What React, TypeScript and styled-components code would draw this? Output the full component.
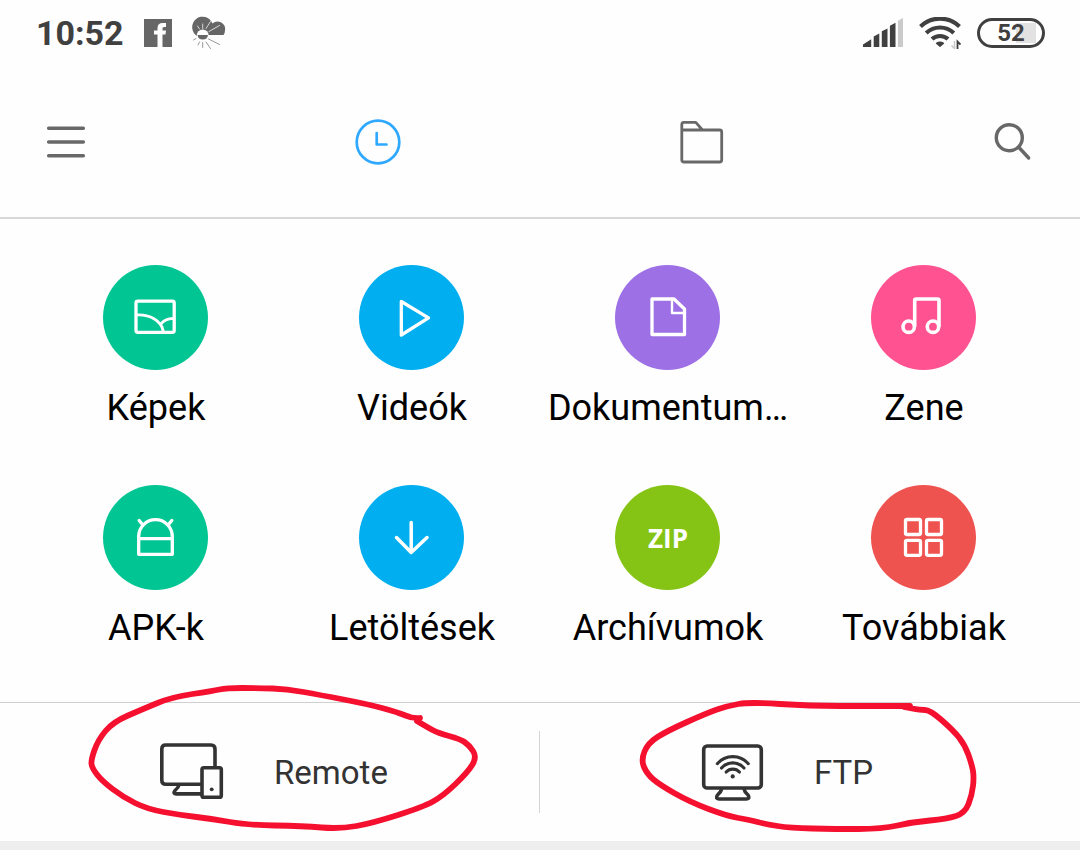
import React from "react";
import styled, { createGlobalStyle } from "styled-components";

const GlobalStyle = createGlobalStyle`
  * { box-sizing: border-box; }
  body { margin: 0; background: #eeeeee; font-family: Roboto, "Liberation Sans", sans-serif; }
  button { font: inherit; color: inherit; background: none; border: 0; padding: 0; margin: 0; cursor: pointer; }
  svg { display: block; flex: none; }
`;

const Screen = styled.main`
  background: #fefefe;
`;

const StatusBar = styled.div`
  display: flex;
  justify-content: space-between;
  padding: 13px 35px 14px 36px;
  color: #404040;
`;

const StatusGroup = styled.div<{ $gap: number }>`
  display: flex;
  align-items: center;
  height: 40px;
  gap: ${(p) => p.$gap}px;
`;

const Time = styled.time`
  font-size: 34px;
  line-height: 40px;
  font-weight: 700;
`;

const Battery = styled.div`
  display: flex;
  align-items: center;
  justify-content: center;
  width: 68px;
  height: 30px;
  border: 3px solid #404040;
  border-radius: 15px;
  background: linear-gradient(90deg, #e2e2e2, #e2e2e2) 36px center / 20px 20px no-repeat;
  font-size: 24px;
  line-height: 24px;
  font-weight: 700;
`;

const TabBar = styled.nav`
  display: grid;
  grid-template-columns: 2fr 3fr 3fr 2fr;
  height: 152px;
  border-bottom: 2px solid #d8d8d8;
`;

const TabButton = styled.button<{ $align?: string; $active?: boolean }>`
  display: flex;
  align-items: center;
  justify-content: ${(p) => p.$align ?? "center"};
  padding: 0 46px;
  color: ${(p) => (p.$active ? "#2fa8ff" : "#686868")};
`;

const Categories = styled.section`
  display: grid;
  grid-template-columns: repeat(4, minmax(0, 1fr));
  row-gap: 55px;
  padding: 46px 29px 52px 27px;
`;

const Category = styled.button`
  display: flex;
  flex-direction: column;
  align-items: center;
  gap: 16px;
`;

const Disc = styled.span<{ $color: string }>`
  display: flex;
  align-items: center;
  justify-content: center;
  width: 105px;
  height: 105px;
  border-radius: 50%;
  background: ${(p) => p.$color};
  color: #fff;
`;

const ZipMark = styled.span`
  padding-left: 2px;
  font-family: "Open Sans", "Noto Sans", sans-serif;
  font-size: 26px;
  line-height: 36px;
  font-weight: 700;
`;

const CategoryLabel = styled.span`
  padding-left: 2px;
  font-size: 36px;
  line-height: 44px;
  color: #000;
  white-space: nowrap;
`;

const Connections = styled.section`
  display: grid;
  grid-template-columns: 1fr 1fr;
  border-top: 1px solid #d0d0d0;
`;

const Connection = styled.div`
  position: relative;
  display: flex;
  padding: 28px 0;

  &:first-child > button {
    border-right: 1px solid #d4d4d4;
  }
`;

const ConnectionButton = styled.button`
  display: flex;
  align-items: center;
  gap: 49px;
  width: 100%;
  height: 82px;
  padding-left: 160px;
  font-size: 33px;
  line-height: 40px;
  color: #333;
`;

const ConnectionLabel = styled.span`
  padding: 2px 0 0 1px;
`;

const Scribble = styled.svg`
  position: absolute;
  top: 0;
  left: 0;
  overflow: visible;
  pointer-events: none;
`;

type Point = [number, number];

/* Joins the pen samples with curves through the midpoints. */
const penPath = (pts: Point[]) => {
  let d = `M${pts[0][0]} ${pts[0][1]}`;
  for (let i = 1; i < pts.length - 1; i++) {
    const [x, y] = pts[i];
    const [nx, ny] = pts[i + 1];
    d += ` Q${x} ${y} ${(x + nx) / 2} ${(y + ny) / 2}`;
  }
  const last = pts[pts.length - 1];
  return `${d} L${last[0]} ${last[1]}`;
};

const remoteLoop: Point[] = [
  [420, 718], [414, 719], [397, 712], [367, 704], [320, 695], [287, 689], [258, 688], [226, 688],
  [213, 691], [172, 697], [143, 709], [113, 722], [98, 740], [91, 760], [92, 768], [102, 781],
  [123, 797], [147, 809], [180, 815], [213, 819], [247, 825], [303, 826], [340, 829], [373, 823],
  [423, 807], [443, 796], [468, 772], [477, 757], [469, 745], [460, 739], [438, 733], [427, 727],
  [417, 721],
];

const ftpLoop: Point[] = [
  [910, 706], [870, 706], [810, 706], [750, 702], [727, 706], [707, 713], [667, 731], [648, 743],
  [641, 760], [647, 774], [660, 785], [690, 802], [727, 816], [750, 820], [765, 824], [790, 828],
  [835, 829], [882, 829], [913, 822], [947, 819], [965, 813], [972, 795], [974, 777], [972, 765],
  [965, 745], [953, 730], [930, 710], [920, 710], [904, 707],
];

const PenLoop = ({ points, x }: { points: Point[]; x: number }) => (
  <Scribble width="540" height="138" viewBox={`${x} 703 540 138`} fill="none" aria-hidden="true">
    <path d={penPath(points)} stroke="#f4102e" strokeWidth="5.800" strokeLinecap="round" strokeLinejoin="round" />
  </Scribble>
);

const DiscIcon = ({ children }: { children: React.ReactNode }) => (
  <svg width="105" height="105" viewBox="0 0 105 105" fill="none" stroke="currentColor" strokeWidth="3.300" strokeLinecap="round" strokeLinejoin="round" aria-hidden="true">
    {children}
  </svg>
);

const categories = [
  {
    label: "Képek",
    color: "#02c594",
    icon: (
      <DiscIcon>
        <rect x="33" y="36.200" width="38.200" height="31.200" rx="1.800" />
        <path d="M34 50C46 49.500 58.500 55 60.500 67M70.500 53.300Q61.500 53.500 57.500 59.500" strokeWidth="2.800" />
      </DiscIcon>
    ),
  },
  {
    label: "Videók",
    color: "#01aeef",
    icon: (
      <DiscIcon>
        <path d="M42.300 36.500L69.500 52.800L42.300 70Z" />
      </DiscIcon>
    ),
  },
  {
    label: "Dokumentum…",
    color: "#9d70e6",
    icon: (
      <DiscIcon>
        <path d="M37 34H59L69.500 44V69.500H37Z" />
        <path d="M57 34.500V48H69" strokeWidth="2.400" />
      </DiscIcon>
    ),
  },
  {
    label: "Zene",
    color: "#ff5290",
    icon: (
      <DiscIcon>
        <circle cx="37.700" cy="61.700" r="5.700" strokeWidth="3.600" />
        <circle cx="62" cy="61.700" r="5.700" strokeWidth="3.600" />
        <path d="M43.700 61V35.500Q43.700 34 45.200 34H66.500Q68 34 68 35.500V61" strokeWidth="3.600" />
      </DiscIcon>
    ),
  },
  {
    label: "APK-k",
    color: "#02c594",
    icon: (
      <DiscIcon>
        <path d="M35.700 69.300V51.500A16.800 16.800 0 0 1 69.300 51.500V69.300ZM35.700 53.700H69.300" />
        <path d="M36.200 35.500L39.500 39.500M68.800 35.500L65.500 39.500" />
      </DiscIcon>
    ),
  },
  {
    label: "Letöltések",
    color: "#01aeef",
    icon: (
      <DiscIcon>
        <path d="M52.200 37.500V67.500M37.500 52.500L52.200 67.500L68 52.500" strokeWidth="3.500" />
      </DiscIcon>
    ),
  },
  { label: "Archívumok", color: "#85c415", icon: <ZipMark>ZIP</ZipMark> },
  {
    label: "Továbbiak",
    color: "#ef5350",
    icon: (
      <DiscIcon>
        <rect x="34.500" y="34.500" width="15" height="15" rx="1.500" />
        <rect x="55.500" y="34.500" width="15" height="15" rx="1.500" />
        <rect x="34.500" y="55.300" width="15" height="15" rx="1.500" />
        <rect x="55.500" y="55.300" width="15" height="15" rx="1.500" />
      </DiscIcon>
    ),
  },
];

const FacebookIcon = () => (
  <svg width="28" height="28" viewBox="0 0 28 28" aria-label="Facebook">
    <path d="M0 0H28V28H0Z" fill="#666" />
    <path d="M13.500 28V15.500H10V11.500H13.500V9C13.500 5.700 15.500 4 18.500 4H22V8H20.200C18.800 8 18.500 8.700 18.500 10V11.500H22L21.500 15.500H18.500V28Z" fill="#fefefe" />
  </svg>
);

const WeatherIcon = () => (
  <svg width="34" height="34" viewBox="0 0 34 34" aria-label="Weather">
    <path d="M5 20A10.500 10.500 0 1 1 20.500 7.500A7.600 7.600 0 0 1 33 14.500Q33 17 31.500 19H17Z" fill="#666" />
    <g stroke="#e4e4e4" strokeWidth="0.900" strokeLinecap="round">
      <path d="M10.700 12.500V8M14 12.500L18.500 5.500M17 15.500L27.500 9.500M7.500 13L5.500 10" />
    </g>
    <circle cx="10.700" cy="19.500" r="6" fill="#fefefe" />
    <path d="M5.500 19H16A5.300 5.300 0 0 1 5.500 19Z" fill="#666" />
    <g stroke="#999" strokeWidth="1" strokeLinecap="round">
      <path d="M10.700 26.500V31.500M14 26L18.500 32.500M16.500 23L27.500 28.500M7.500 26L6 29M4 22.500L1.500 24" />
    </g>
  </svg>
);

const SignalIcon = () => (
  <svg width="40" height="30" viewBox="0 0 40 30" fill="#404040" aria-label="Signal">
    <path d="M0 29V26.500L8.200 21.300V29ZM10.700 29V18.500L16.300 15.500V29ZM18.800 29V13.300L24.500 10.500V29ZM26.900 29V7.800L32.500 4.700V29Z" />
    <path d="M34.900 29V2.800L40 0V29Z" fill="#cacaca" />
  </svg>
);

const WifiIcon = () => (
  <svg width="42" height="32" viewBox="0 0 42 32" fill="none" stroke="#404040" strokeWidth="4.100" aria-label="Wi-Fi">
    <path d="M1.500 9.500A28 28 0 0 1 40.500 9.500M7.200 16A20 20 0 0 1 34.800 16M13 22A12 12 0 0 1 29 22" />
    <path d="M17.500 26.300Q21 23.800 24.500 26.300L21 29.300Z" fill="#404040" stroke="#404040" strokeWidth="1.300" strokeLinejoin="round" />
    <path d="M35.500 24V31.500L32.500 28.500" stroke="#cacaca" strokeWidth="1.500" />
    <path d="M38.500 32.500V24.500L41.500 27.500" strokeWidth="1.800" />
  </svg>
);

const MenuIcon = () => (
  <svg width="40" height="34" viewBox="0 0 40 34" fill="none" stroke="currentColor" strokeWidth="3.600" strokeLinecap="round" aria-hidden="true">
    <path d="M2.700 3.200H37.300M2.700 17H37.300M2.700 30.800H37.300" />
  </svg>
);

const ClockIcon = () => (
  <svg width="46" height="46" viewBox="0 0 46 46" fill="none" stroke="currentColor" strokeWidth="2.700" strokeLinecap="round" strokeLinejoin="round" aria-hidden="true">
    <circle cx="23" cy="23" r="21.300" />
    <path d="M21.700 14V25.500H31.500" />
  </svg>
);

const FolderIcon = () => (
  <svg width="44" height="44" viewBox="0 0 44 44" fill="none" stroke="currentColor" strokeWidth="2.800" strokeLinejoin="round" aria-hidden="true">
    <path d="M1.800 10H39.500Q41.700 10 41.700 12V40Q41.700 42 39.500 42H4Q1.800 42 1.800 40V4.500Q1.800 2.300 4 2.300H15.800L22.500 10" />
  </svg>
);

const SearchIcon = () => (
  <svg width="40" height="38" viewBox="0 0 40 38" fill="none" stroke="currentColor" strokeWidth="3.400" strokeLinecap="round" aria-hidden="true">
    <circle cx="15.300" cy="14.700" r="13" />
    <path d="M25 24.500L34.700 35" />
  </svg>
);

const RemoteIcon = () => (
  <svg width="64" height="58" viewBox="0 0 64 58" fill="none" stroke="currentColor" strokeWidth="3.600" strokeLinejoin="round" aria-hidden="true">
    <path d="M55 24V6Q55 2 51 2H5.700Q1.800 2 1.800 6V37.300Q1.800 41.300 5.700 41.300H41.500" />
    <path d="M19 42Q18.500 44.500 15 47.500Q12.500 50.700 16.500 50.900H41.500" />
    <rect x="42" y="24.700" width="19.300" height="29.500" rx="1.800" />
    <circle cx="51.700" cy="46.300" r="1.900" fill="currentColor" stroke="none" />
  </svg>
);

const FtpIcon = () => (
  <svg width="64" height="57" viewBox="-2 0 64 57" fill="none" stroke="currentColor" strokeWidth="3.600" strokeLinejoin="round" aria-hidden="true">
    <rect x="1.700" y="2" width="57.600" height="42" rx="3.500" />
    <path d="M19.700 45Q19 48 15.500 51Q13 54.800 17 55H44.500Q48.500 54.800 46 51Q42.500 48 42 45" />
    <path d="M15.300 19.700A20.500 20.500 0 0 1 46.300 19.700M19.500 24A15 15 0 0 1 42 24M24.200 28A9 9 0 0 1 37.400 28" strokeWidth="3.100" strokeLinecap="round" />
    <circle cx="30.700" cy="32.400" r="2.100" fill="currentColor" stroke="none" />
  </svg>
);

export default function App() {
  return (
    <>
      <GlobalStyle />
      <Screen>
        <StatusBar>
          <StatusGroup $gap={20}>
            <Time>10:52</Time>
            <FacebookIcon />
            <WeatherIcon />
          </StatusGroup>
          <StatusGroup $gap={16}>
            <SignalIcon />
            <WifiIcon />
            <Battery>52</Battery>
          </StatusGroup>
        </StatusBar>
        <TabBar>
          <TabButton $align="flex-start" aria-label="Menu">
            <MenuIcon />
          </TabButton>
          <TabButton $active aria-label="Recent">
            <ClockIcon />
          </TabButton>
          <TabButton aria-label="Folders">
            <FolderIcon />
          </TabButton>
          <TabButton $align="flex-end" aria-label="Search">
            <SearchIcon />
          </TabButton>
        </TabBar>
        <Categories>
          {categories.map((c) => (
            <Category key={c.label}>
              <Disc $color={c.color}>{c.icon}</Disc>
              <CategoryLabel>{c.label}</CategoryLabel>
            </Category>
          ))}
        </Categories>
        <Connections>
          <Connection>
            <ConnectionButton>
              <RemoteIcon />
              <ConnectionLabel>Remote</ConnectionLabel>
            </ConnectionButton>
            <PenLoop points={remoteLoop} x={0} />
          </Connection>
          <Connection>
            <ConnectionButton>
              <FtpIcon />
              <ConnectionLabel>FTP</ConnectionLabel>
            </ConnectionButton>
            <PenLoop points={ftpLoop} x={540} />
          </Connection>
        </Connections>
      </Screen>
    </>
  );
}
